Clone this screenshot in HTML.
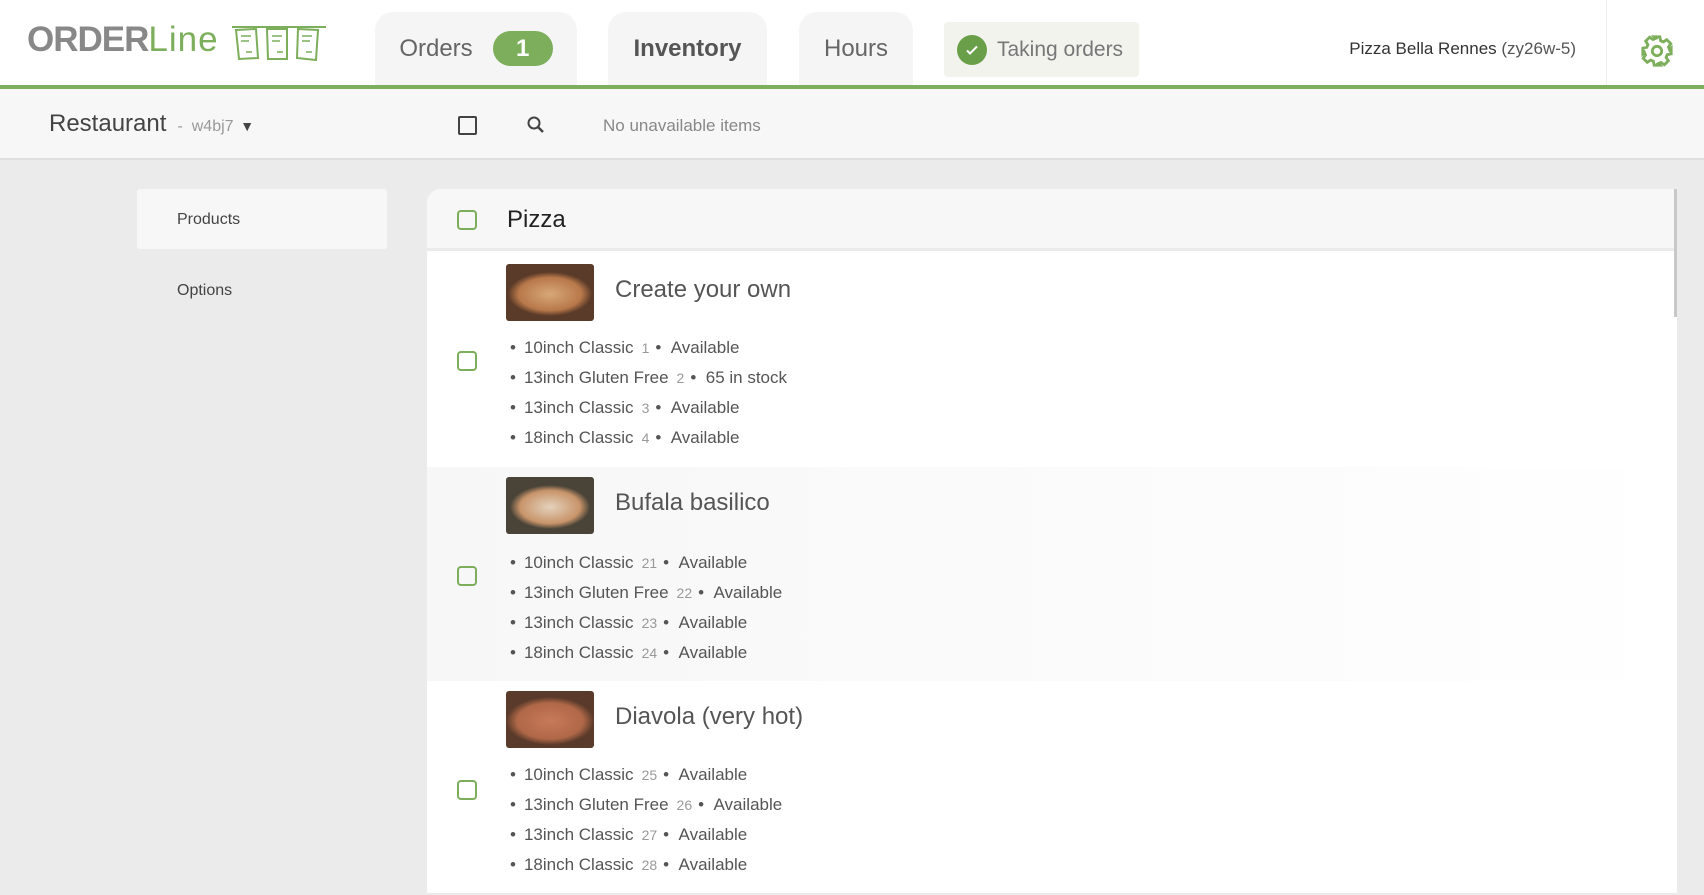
<!DOCTYPE html>
<html><head><meta charset="utf-8"><style>
*{box-sizing:border-box;margin:0;padding:0}
body{width:1704px;height:893px;overflow:hidden;background:#ebebeb;font-family:"Liberation Sans",sans-serif;color:#555;position:relative}
.hdr{position:absolute;left:0;top:0;width:1704px;height:89px;background:#fff;border-bottom:4px solid #7cae5b}
.abs{position:absolute}
.tab{position:absolute;top:12px;height:73px;background:#f5f5f5;border-radius:18px 18px 0 0;font-size:24px;color:#666;display:flex;align-items:center;justify-content:center}
.tb{position:absolute;left:0;top:89px;width:1704px;height:71px;background:#f7f7f7;border-bottom:2px solid #e0e0e0}
.cb{position:absolute;width:20px;height:20px;border:2.5px solid #7cae5b;border-radius:4px}
.item{position:absolute;left:427px;width:1250px;height:214px}
.img{position:absolute;left:79px;top:10px;width:88px;height:57px;border-radius:3px;overflow:hidden;background:#4a3020}
.t{position:absolute;left:188px;top:22px;font-size:24px;color:#555}
.l{position:absolute;left:83px;font-size:17px;color:#555;white-space:nowrap}
.l b{font-weight:normal;color:#999;font-size:14px;margin:0 6px 0 8px}
.l:before{content:"•";margin-right:8px}
</style></head><body>
<div class="hdr"></div>
<div class="abs" style="left:27px;top:20px;font-size:35px;font-weight:bold;color:#888;letter-spacing:-1px">ORDER<span style="font-weight:normal;color:#7cae5b;letter-spacing:1px">Line</span></div>
<svg class="abs" style="left:232px;top:24px" width="96" height="38" viewBox="0 0 96 38" fill="none" stroke="#7cae5b" stroke-width="2">
<line x1="0" y1="3" x2="94" y2="3"/>
<path d="M4 6 L24 5 L26 34 L7 35 Z"/><path d="M35 5 L55 5 L55 35 L36 35 Z"/><path d="M66 5 L86 6 L84 36 L65 34 Z"/>
<path d="M9 12h10M9 17h8M14 28h6M40 12h10M40 17h8M45 28h6M70 12h10M70 17h8M74 28h6" stroke-width="1.5"/></svg>
<div class="tab" style="left:375px;width:202px"><span style="margin-right:20px">Orders</span><span style="background:#7cae5b;color:#fff;border-radius:18px;width:60px;height:35px;display:flex;align-items:center;justify-content:center;font-weight:bold">1</span></div>
<div class="tab" style="left:608px;width:159px;font-weight:bold;color:#555;background:#f5f5f5">Inventory</div>
<div class="tab" style="left:799px;width:114px">Hours</div>
<div class="abs" style="left:944px;top:22px;width:195px;height:55px;background:#f3f3ee;border-radius:4px;display:flex;align-items:center;font-size:21px;color:#777">
<span style="width:30px;height:30px;border-radius:50%;background:#6a9f4a;margin:0 10px 0 13px;display:flex;align-items:center;justify-content:center"><svg width="16" height="16" viewBox="0 0 16 16"><path d="M3 8.5l3 3 7-7" stroke="#fff" stroke-width="2" fill="none"/></svg></span>Taking orders</div>
<div class="abs" style="right:128px;top:39px;font-size:17px;color:#333">Pizza Bella Rennes <span style="color:#555">(zy26w-5)</span></div>
<div class="abs" style="left:1606px;top:0;width:1px;height:85px;background:#eee"></div>
<svg class="abs" style="left:1640px;top:34px" width="34" height="34" viewBox="0 0 24 24"><path fill="none" stroke="#7cae5b" stroke-width="2" d="M10 2h4l.6 2.8 1.9.8 2.4-1.6 2.8 2.8-1.6 2.4.8 1.9L22 10v4l-2.8.6-.8 1.9 1.6 2.4-2.8 2.8-2.4-1.6-1.9.8L14 22h-4l-.6-2.8-1.9-.8-2.4 1.6-2.8-2.8 1.6-2.4-.8-1.9L2 14v-4l2.8-.6.8-1.9-1.6-2.4 2.8-2.8 2.4 1.6 1.9-.8z"/><circle cx="12" cy="12" r="3.3" fill="none" stroke="#7cae5b" stroke-width="2"/></svg>
<div class="tb"></div>
<div class="abs" style="left:49px;top:110px;font-size:24px;color:#444">Restaurant <span style="font-size:16px;color:#999">&nbsp;-&nbsp; w4bj7</span> <span style="font-size:14px;color:#444">▼</span></div>
<div class="abs" style="left:458px;top:116px;width:19px;height:19px;border:2px solid #444;border-radius:2px"></div>
<svg class="abs" style="left:526px;top:115px" width="20" height="20" viewBox="0 0 20 20"><circle cx="8" cy="8" r="5.5" stroke="#444" stroke-width="2" fill="none"/><path d="M12 12l5 5" stroke="#444" stroke-width="2.4"/></svg>
<div class="abs" style="left:603px;top:116px;font-size:17px;color:#888">No unavailable items</div>
<div class="abs" style="left:137px;top:189px;width:250px;height:60px;background:#f7f7f7;border-radius:3px;font-size:16px;color:#444;padding:22px 0 0 40px">Products</div>
<div class="abs" style="left:177px;top:282px;font-size:16px;color:#444">Options</div>
<div class="abs" style="left:427px;top:189px;width:1250px;height:704px;background:#fff;border-radius:14px 0 0 0;overflow:hidden">
<div style="height:62px;background:#f7f7f7;border-bottom:3px solid #ebebeb"></div></div>
<div class="abs" style="left:1674px;top:189px;width:3px;height:128px;background:#c8c8c8"></div>
<div class="cb" style="left:457px;top:210px"></div>
<div class="abs" style="left:507px;top:206px;font-size:24px;color:#222">Pizza</div>

<div class="item" style="top:254px">
<div class="cb" style="left:30px;top:97px"></div>
<div class="img" style="background:radial-gradient(ellipse 42px 22px at 44px 30px,#d8a878 0,#b8784a 75%,#5a3a28 100%)"></div>
<div class="t">Create your own</div>
<div class="l" style="top:84px">10inch Classic<b>1</b>• &nbsp;Available</div>
<div class="l" style="top:114px">13inch Gluten Free<b>2</b>• &nbsp;65 in stock</div>
<div class="l" style="top:144px">13inch Classic<b>3</b>• &nbsp;Available</div>
<div class="l" style="top:174px">18inch Classic<b>4</b>• &nbsp;Available</div>
</div>
<div class="item" style="top:467px;background:linear-gradient(90deg,#f7f7f7,#fdfdfd 80%,#fff)">
<div class="cb" style="left:30px;top:99px"></div>
<div class="img" style="background:radial-gradient(ellipse 40px 22px at 44px 30px,#e4d2bc 0,#c8946a 75%,#4a4438 100%)"></div>
<div class="t">Bufala basilico</div>
<div class="l" style="top:86px">10inch Classic<b>21</b>• &nbsp;Available</div>
<div class="l" style="top:116px">13inch Gluten Free<b>22</b>• &nbsp;Available</div>
<div class="l" style="top:146px">13inch Classic<b>23</b>• &nbsp;Available</div>
<div class="l" style="top:176px">18inch Classic<b>24</b>• &nbsp;Available</div>
</div>
<div class="item" style="top:681px">
<div class="cb" style="left:30px;top:99px"></div>
<div class="img" style="background:radial-gradient(ellipse 44px 24px at 44px 30px,#c87a58 0,#b06848 75%,#5a3a2a 100%)"></div>
<div class="t">Diavola (very hot)</div>
<div class="l" style="top:84px">10inch Classic<b>25</b>• &nbsp;Available</div>
<div class="l" style="top:114px">13inch Gluten Free<b>26</b>• &nbsp;Available</div>
<div class="l" style="top:144px">13inch Classic<b>27</b>• &nbsp;Available</div>
<div class="l" style="top:174px">18inch Classic<b>28</b>• &nbsp;Available</div>
</div>
</body></html>
